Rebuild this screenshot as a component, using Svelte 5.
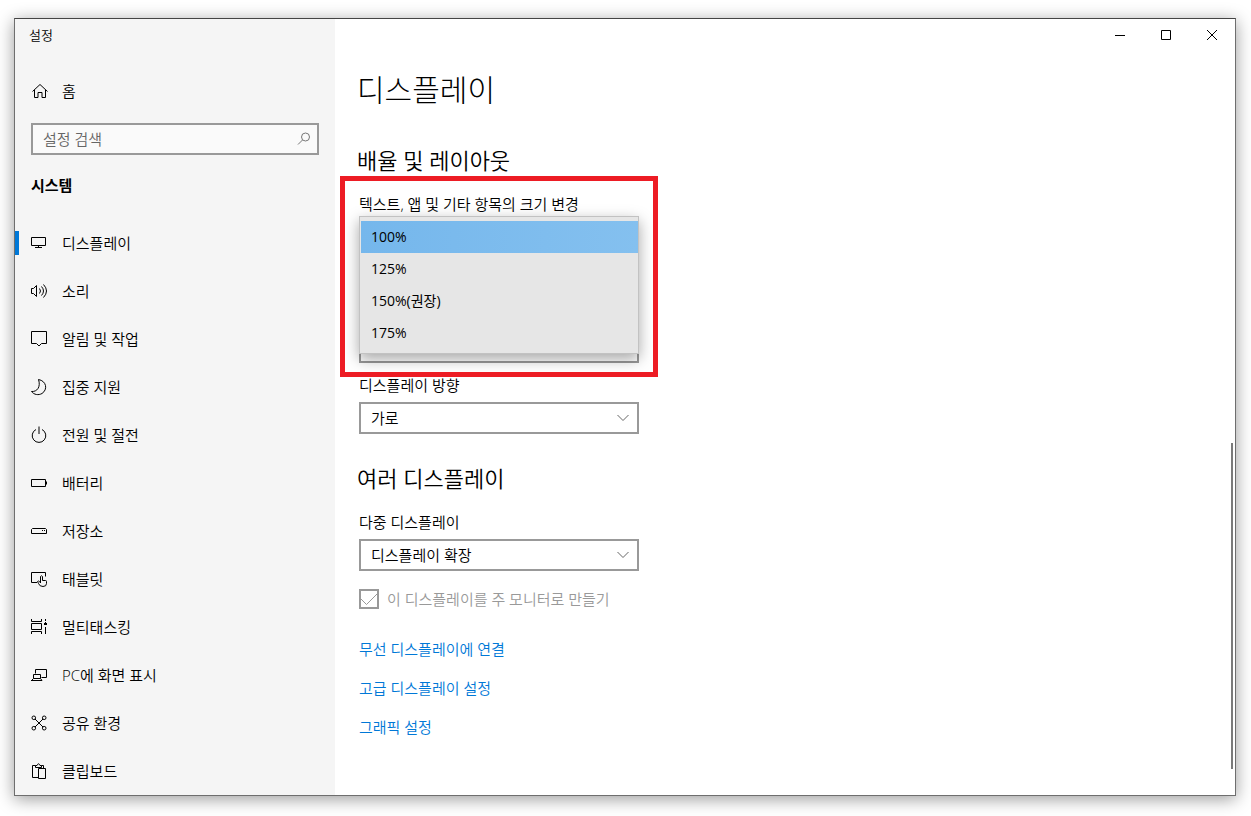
<script lang="ts">
	type NavItem = { id: string; label: string; icon: string; dots?: [number, number][] };

	const navItems: NavItem[] = [
		{ id: 'display', label: '디스플레이', icon: 'M1.5 3.5h14v8h-14zM8.5 11.5v2M5 13.5h7' },
		{
			id: 'sound',
			label: '소리',
			icon: 'M1.5 6.5h2l3-3v11l-3-3h-2zM9.5 6.5q2 2.5 0 5M11.5 4.5q4 4.5 0 9M13.5 2.5q6 6.5 0 13'
		},
		{ id: 'alerts', label: '알림 및 작업', icon: 'M1.5 1.5h15v12h-5l-2.5 2.5-2.5-2.5h-5z' },
		{
			id: 'focus',
			label: '집중 지원',
			icon: 'M8.5 1.5c8 1.5 9.5 10 3.5 14c-3.5 2-8 1.3-10.5-2c5.5.5 9.5-4.5 7-12z'
		},
		{ id: 'power', label: '전원 및 절전', icon: 'M6 3.5a6.8 6.8 0 1 0 6 0M9 .5v7.5' },
		{ id: 'battery', label: '배터리', icon: 'M1.5 5.5h14v7h-14zM16.5 7.5v3' },
		{
			id: 'storage',
			label: '저장소',
			icon: 'M2.5 6.5h13l1 1v4h-15v-4z',
			dots: [[12, 8], [14, 8]]
		},
		{
			id: 'tablet',
			label: '태블릿',
			icon: 'M7 12.5h-5.5v-10h14v4M10.5 13v-6.5q1-1.5 2 0v4h3q1 0 1 1v2q0 3-3.5 3t-4.5-3l-1-2q.5-1.5 3 1'
		},
		{
			id: 'multitasking',
			label: '멀티태스킹',
			icon: 'M1.5 1v2.5h10v-2.5M1.5 5.5h10v6h-10zM1.5 16v-2.5h10v2.5M15.5 1v2M15.5 9v7',
			dots: [[15, 4], [14, 5], [15, 5], [16, 5], [14, 6], [15, 6], [16, 6]]
		},
		{
			id: 'projecting',
			label: 'PC에 화면 표시',
			icon: 'M5.5 7.5v-4h11v8h-5M3.5 8.5h7v4h-7zM1 14.5h11l-1.5-2M1.5 14.5l2-2'
		},
		{
			id: 'shared',
			label: '공유 환경',
			icon: 'M5 5l8 8M13 5l-8 8M2 3.8a1.8 1.8 0 1 0 3.6 0a1.8 1.8 0 1 0-3.6 0M12.4 3.8a1.8 1.8 0 1 0 3.6 0a1.8 1.8 0 1 0-3.6 0M2 14.2a1.8 1.8 0 1 0 3.6 0a1.8 1.8 0 1 0-3.6 0M12.4 14.2a1.8 1.8 0 1 0 3.6 0a1.8 1.8 0 1 0-3.6 0',
			dots: [[8, 8], [9, 8], [8, 9], [9, 9]]
		},
		{
			id: 'clipboard',
			label: '클립보드',
			icon: 'M8 15.5h-5.5v-12h3M11.5 3.5h2v3M5.5 5.5v-2h1.5q1.5-3.5 3 0h1.5v2zM8.5 6.5h7v10h-7z'
		}
	];

	const scales = ['100%', '125%', '150%(권장)', '175%'];
	const links = ['무선 디스플레이에 연결', '고급 디스플레이 설정', '그래픽 설정'];

	let active = $state('display');
	let scale = $state('100%');
</script>

{#snippet chevron()}
	<svg class="chevron" width="12" height="8" viewBox="0 0 12 8" aria-hidden="true">
		<path d="M.5 1l5.5 5.5L11.5 1" />
	</svg>
{/snippet}

<div class="desktop">
	<div class="window">
		<aside class="sidebar">
			<div class="window-title">설정</div>

			<button class="nav-item home">
				<svg class="icon" viewBox="0 0 18 18" aria-hidden="true">
					<path d="M2.5 9.5L10 2.5L17.5 9.5M4.5 8v7.5h3.5v-5h4v5h3.5V8" />
				</svg>
				홈
			</button>

			<div class="search">
				<input type="text" placeholder="설정 검색" aria-label="설정 검색" />
				<svg width="14" height="14" viewBox="0 0 14 14" aria-hidden="true">
					<circle cx="8.5" cy="5" r="4" />
					<path d="M5.5 8L1 12.5" />
				</svg>
			</div>

			<h2 class="category">시스템</h2>

			<nav>
				{#each navItems as item (item.id)}
					<button
						class="nav-item"
						class:active={active === item.id}
						onclick={() => (active = item.id)}
					>
						<svg class="icon" viewBox="0 0 18 18" aria-hidden="true">
							<path d={item.icon} />
							{#each item.dots ?? [] as [x, y]}
								<rect {x} {y} width="1" height="1" />
							{/each}
						</svg>
						{item.label}
					</button>
				{/each}
			</nav>
		</aside>

		<main>
			<div class="caption">
				<button aria-label="최소화">
					<svg width="10" height="10" viewBox="0 0 10 10"><path d="M0 5.5h10" /></svg>
				</button>
				<button aria-label="최대화">
					<svg width="10" height="10" viewBox="0 0 10 10"><path d="M.5.5h9v9h-9z" /></svg>
				</button>
				<button aria-label="닫기">
					<svg width="10" height="10" viewBox="0 0 10 10"><path d="M0 0l10 10M10 0L0 10" /></svg>
				</button>
			</div>

			<div class="content">
				<h1>디스플레이</h1>

				<section>
					<h2>배율 및 레이아웃</h2>

					<div class="scale">
						<div class="label" id="scale-label">텍스트, 앱 및 기타 항목의 크기 변경</div>
						<div class="resolution">
							<select aria-label="디스플레이 해상도"></select>
						</div>
						<div class="popup" role="listbox" aria-labelledby="scale-label">
							{#each scales as value}
								<button
									role="option"
									aria-selected={scale === value}
									class:selected={scale === value}
									onclick={() => (scale = value)}>{value}</button
								>
							{/each}
						</div>
						<div class="highlight"></div>
					</div>

					<label class="label" for="orientation">디스플레이 방향</label>
					<div class="combo">
						<select id="orientation"><option>가로</option></select>
						{@render chevron()}
					</div>
				</section>

				<section>
					<h2>여러 디스플레이</h2>

					<label class="label" for="multiple">다중 디스플레이</label>
					<div class="combo">
						<select id="multiple"><option>디스플레이 확장</option></select>
						{@render chevron()}
					</div>

					<label class="check">
						<input type="checkbox" checked disabled />
						<svg width="20" height="20" viewBox="0 0 20 20" aria-hidden="true">
							<path d="M2 10l5.5 5.5L18 5" />
						</svg>
						이 디스플레이를 주 모니터로 만들기
					</label>
				</section>

				<div class="links">
					{#each links as link}
						<a href="#settings">{link}</a>
					{/each}
				</div>
			</div>

			<div class="scroll-thumb"></div>
		</main>
	</div>
</div>

<style>
	:global(body) {
		background: #fff;
	}

	.desktop {
		box-sizing: border-box;
		min-height: 100vh;
		padding: 18px 15px 20px 14px;
		display: flex;
		font-family: 'Open Sans', 'Noto Sans CJK KR', sans-serif;
		font-size: 15px;
		font-weight: 350;
		line-height: 20px;
		color: #000;
	}

	.window {
		flex: 1;
		display: flex;
		border: 1px solid #6e6e6e;
		border-top-color: #444;
		background: #fff;
		box-shadow: 0 3px 16px rgba(0, 0, 0, 0.4);
	}

	button,
	input,
	select {
		box-sizing: border-box;
		margin: 0;
		font: inherit;
		color: inherit;
	}

	button {
		border: none;
		background: none;
	}

	svg {
		fill: none;
		stroke: #000;
		flex-shrink: 0;
	}

	h1,
	h2 {
		margin: 0;
	}

	/* sidebar */

	.sidebar {
		width: 320px;
		flex-shrink: 0;
		background: #f5f5f5;
	}

	.window-title {
		padding: 6px 14px;
		font-size: 13px;
	}

	.nav-item {
		position: relative;
		display: flex;
		align-items: center;
		gap: 14px;
		width: 100%;
		height: 48px;
		padding: 0 15px;
		text-align: left;
	}
	.nav-item:hover {
		background: #e6e6e6;
	}
	.nav-item.active::before {
		content: '';
		position: absolute;
		left: 0;
		width: 4px;
		height: 24px;
		background: #0078d7;
	}

	.home {
		margin-top: 16px;
	}

	.icon {
		width: 18px;
		height: 18px;
	}
	.icon rect {
		fill: #000;
		stroke: none;
	}

	.search {
		display: flex;
		align-items: center;
		box-sizing: border-box;
		height: 32px;
		margin: 8px 16px 0;
		padding: 0 6px 0 10px;
		border: 2px solid #999;
		background: #fafafa;
	}
	.search input {
		flex: 1;
		min-width: 0;
		padding: 0;
		border: none;
		outline: none;
		background: none;
	}
	.search input::placeholder {
		color: #666;
		opacity: 1;
	}
	.search svg {
		stroke: #777;
	}

	.category {
		padding: 20px 16px 24px;
		font-size: 15px;
		font-weight: 700;
	}

	/* content */

	main {
		position: relative;
		flex: 1;
		min-width: 0;
	}

	.caption {
		display: flex;
		justify-content: flex-end;
	}
	.caption button {
		display: flex;
		align-items: center;
		justify-content: center;
		width: 46px;
		height: 32px;
		padding: 0;
	}
	.caption button:hover {
		background: #e5e5e5;
	}

	.content {
		padding: 19px 24px;
	}

	h1 {
		margin-left: -2px;
		font-size: 30px;
		font-weight: 300;
		line-height: 40px;
	}

	section {
		margin-bottom: 30px;
	}

	section h2 {
		margin-left: -2px;
		margin-bottom: 20px;
		font-size: 22px;
		font-weight: 350;
		line-height: 28px;
	}

	h1 + section {
		margin-top: 36px;
	}

	.scale {
		position: relative;
		width: 280px;
		margin-bottom: 12px;
	}

	.resolution {
		padding-top: 117px;
	}

	.popup {
		position: absolute;
		top: 22px;
		left: 0;
		right: 0;
		padding: 4px 0 4px 1px;
		border: 1px solid #c2c2c2;
		background: #e6e6e6;
		box-shadow: 0 5px 14px rgba(0, 0, 0, 0.35);
	}
	.popup button {
		display: block;
		width: 100%;
		height: 32px;
		padding: 0 10px;
		text-align: left;
		font-size: 14px;
		font-weight: 400;
	}
	.popup button:hover {
		background: #d4d4d4;
	}
	.popup button.selected {
		background: linear-gradient(90deg, #75b7ec, #84c0ef);
	}

	.highlight {
		position: absolute;
		inset: -18px -19px -14px;
		border: 5px solid #ed1c24;
		pointer-events: none;
	}

	.label {
		display: block;
	}

	.combo {
		position: relative;
		width: 280px;
		margin-top: 7px;
	}

	select {
		display: block;
		appearance: none;
		width: 100%;
		height: 32px;
		padding: 0 10px;
		border: 2px solid #999;
		border-radius: 0;
		background: #fff;
	}

	.chevron {
		position: absolute;
		right: 10px;
		top: 12px;
		stroke: #666;
		pointer-events: none;
	}

	.check {
		position: relative;
		display: flex;
		gap: 8px;
		margin-top: 18px;
		color: #999;
	}
	.check input {
		appearance: none;
		width: 20px;
		height: 20px;
		border: 2px solid #999;
	}
	.check svg {
		position: absolute;
		left: 0;
		top: 0;
		stroke: #999;
	}

	.links {
		display: flex;
		flex-direction: column;
		align-items: flex-start;
		gap: 19px;
	}
	.links a {
		color: #0078d7;
		text-decoration: none;
	}
	.links a:hover {
		color: #666;
	}

	.scroll-thumb {
		position: absolute;
		right: 2px;
		bottom: 26px;
		width: 2px;
		height: 42%;
		background: #7a7a7a;
	}
</style>
